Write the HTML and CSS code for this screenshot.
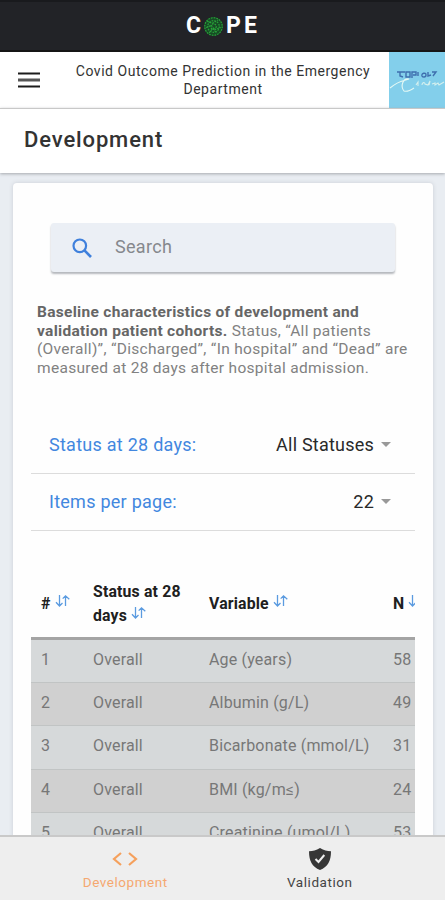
FILE: index.html
```html
<!DOCTYPE html>
<html lang="en">
<head>
<meta charset="utf-8">
<title>COPE</title>
<link rel="stylesheet" href="styles.css">
</head>
<body>
<svg class="defs" width="0" height="0">
  <symbol id="sort" viewBox="0 0 16 14"><path d="M4.500 1v11M1 8.200 4.500 12 7.500 9M10.500 12V2M7.700 4.600 10.500 1.800l3.800 3.400" fill="none" stroke="#5b9be0" stroke-width="1.300"/></symbol>
</svg>
<div class="app">
  <header class="brand"><span class="brand-c">C</span><svg class="globe" viewBox="0 0 18 18"><circle cx="9" cy="9" r="9" fill="#174a25"/><g fill="none" stroke="#28a43a" stroke-width="1.100" stroke-dasharray="1.600 1"><circle cx="9" cy="9" r="8.300"/><circle cx="9" cy="9" r="5.500"/><circle cx="9" cy="9" r="2.600"/><path d="M3 4l5 2 5-3M2 10l5-2 3 4 6-2M5 15l3-4 4 4"/></g></svg><span class="brand-p">P</span><span>E</span></header>
  <div class="bar">
    <svg class="menu" viewBox="0 0 22 16"><path d="M0 1.500h22M0 14.500h22" stroke="#1c1c1c" stroke-width="2"/><path d="M0 8h22" stroke="#555" stroke-width="3"/></svg>
    <div class="tagline">Covid Outcome Prediction in the Emergency<br>Department</div>
    <svg class="badge" viewBox="0 0 56 56"><rect width="56" height="56" fill="#83cfeb"/><g fill="none" stroke="#3f6fae" stroke-width="1.400"><path d="M8 20h8M11 20v4l3 1M17 20v5h4v-5zM23 26v-6h4v3h-3M29 20v4M33 24c-1-3 4-4 4-1s-4 2-4 1M39 20v4l3-1M43 20h4l-3 4"/></g><path d="M1 36c5-4 8-6 19-9-6-1-9 7-5 12 3 1 7-1 10-3" fill="none" stroke="#e4f8f4" stroke-width="1.100"/><path d="M27 33l2-3v4M33 33c0-3 3-3 3-1l3 1 2-4-1 4M43 32l3-1v2l3-2 1 2 5-3" fill="none" stroke="#d5f0ee" stroke-width="1.100"/></svg>
  </div>
  <h1 class="title">Development</h1>
  <main class="content">
    <section class="card">
      <div class="search"><svg viewBox="0 0 20 20"><circle cx="7.800" cy="7.800" r="6.300" fill="none" stroke="#3f80dc" stroke-width="2.200"/><path d="M12.200 12.200 19 19" stroke="#3f80dc" stroke-width="2.600"/></svg><span>Search</span></div>
      <p class="intro"><b>Baseline characteristics of development and<br>validation patient cohorts.</b> Status, “All patients<br>(Overall)”, “Discharged”, “In hospital” and “Dead” are<br>measured at 28 days after hospital admission.</p>
      <div class="option"><span class="label">Status at 28 days:</span><span class="value">All Statuses</span><i class="caret"></i></div>
      <div class="option"><span class="label">Items per page:</span><span class="value">22</span><i class="caret"></i></div>
      <div class="table">
        <div class="row head"><span>#<svg class="sort"><use href="#sort"/></svg></span><span>Status at 28<br>days<svg class="sort"><use href="#sort"/></svg></span><span>Variable<svg class="sort"><use href="#sort"/></svg></span><span>N<svg class="sort"><use href="#sort"/></svg></span></div>
        <div class="row"><span>1</span><span>Overall</span><span>Age (years)</span><span>58</span></div>
        <div class="row"><span>2</span><span>Overall</span><span>Albumin (g/L)</span><span>49</span></div>
        <div class="row"><span>3</span><span>Overall</span><span>Bicarbonate (mmol/L)</span><span>31</span></div>
        <div class="row"><span>4</span><span>Overall</span><span>BMI (kg/m≤)</span><span>24</span></div>
        <div class="row"><span>5</span><span>Overall</span><span>Creatinine (umol/L)</span><span>53</span></div>
      </div>
    </section>
  </main>
  <nav class="tabs">
    <div class="tab active"><svg viewBox="0 0 26 24"><path d="M9 6 2 12l7 6M17 6l7 6-7 6" fill="none" stroke="#f5a05c" stroke-width="2.200"/></svg><span>Development</span></div>
    <div class="tab"><svg viewBox="0 0 26 24"><path d="M13 1c4 2.500 7 3 11 3.200C24 14 21 19.500 13 23 5 19.500 2 14 2 4.200 6 4 9 3.500 13 1z" fill="#363636"/><path d="m8.500 12 3 3 5.800-7" fill="none" stroke="#eee" stroke-width="2"/></svg><span>Validation</span></div>
  </nav>
</div>
</body>
</html>
```
FILE: styles.css
```css
* { box-sizing: border-box; }
body { margin: 0; font-family: Roboto, "Liberation Sans", sans-serif; background: #e9edf2; }
.defs { position: absolute; }
.app { height: 900px; display: flex; flex-direction: column; overflow: hidden; }
.brand { height: 52px; flex: none; background: #222327; border-top: 2px solid #191a1d; border-bottom: 2px solid #151515; color: #fff; display: flex; align-items: center; padding-left: 186px; font-size: 23px; font-weight: 700; line-height: 46px; }
.brand-c { width: 18px; }
.globe { width: 19px; height: 19px; margin-right: 3px; }
.brand-p { width: 18px; }
.bar { height: 56px; flex: none; background: #fff; display: flex; align-items: center; }
.menu { width: 22px; height: 16px; margin-left: 18px; flex: none; }
.tagline { margin: 0 -16px 0 0; flex: 1; text-align: center; font-size: 14px; line-height: 18px; letter-spacing: .53px; color: #333; padding: 0 0 1px 1px; }
.badge { width: 56px; height: 56px; flex: none; }
.title { margin: 0; height: 65px; flex: none; background: #fff; border-top: 1px solid #c8c8c8; box-shadow: 0 1px 3px #a5a8ad; font-size: 22px; line-height: 62px; font-weight: 500; letter-spacing: .87px; color: #333; padding-left: 24px; position: relative; }
.content { flex: 1; min-height: 0; padding: 10px 12px 0 13px; }
.card { height: 700px; background: #fefefe; border-radius: 4px 4px 0 0; box-shadow: 0 0 4px #c9ced5; padding: 40px 18px 0; }
.search { height: 49px; margin: 0 20px 0 20px; background: #ebeff5; border-radius: 3px; box-shadow: 0 2px 2px #b5b8bd; display: flex; align-items: center; padding-left: 21px; font-size: 18px; letter-spacing: .3px; color: #85888d; }
.search span { padding-bottom: 3px; }
.search svg { width: 20px; height: 20px; margin: 1px 23px 0 0; }
.intro { margin: 31px 0 0 6px; height: 76px; white-space: nowrap; font-size: 15.500px; line-height: 18.600px; color: #818181; letter-spacing: .3px; }
.intro b { color: #666; font-weight: 700; }
.option { height: 57px; border-bottom: 1px solid #dcdcdc; display: flex; align-items: center; padding: 0 24px 2px 18px; font-size: 18px; }
.intro + .option { margin-top: 38px; }
.label { color: #4287df; flex: 1; letter-spacing: .26px; }
.value { color: #292929; letter-spacing: .22px; }
.caret { border: 5px solid transparent; border-top-color: #999; border-bottom: 0; margin-left: 7px; }
.table { margin-top: 36px; overflow: hidden; }
.row { height: 43.200px; display: grid; grid-template-columns: 52px 116px 184px 60px; align-items: center; padding: 0 0 3px 10px; background: #d6d9da; border-bottom: 1px solid #c1c4c4; color: #777; font-size: 16px; letter-spacing: .17px; white-space: nowrap; }
.row:nth-child(odd) { background: #d0d0d0; }
.row.head { height: 73px; padding: 3px 0 0 10px; background: #fefefe; border-bottom: 3px solid #a4a4a4; color: #202020; font-weight: 700; font-size: 15.800px; line-height: 24px; }
.sort { width: 16px; height: 14px; margin: 0 0 1px 4px; }
.tabs { height: 65px; flex: none; background: #eee; border-top: 2px solid #c9c9c9; display: flex; position: relative; padding: 0 28px; }
.tab { flex: 1; display: flex; flex-direction: column; align-items: center; padding-top: 10px; font-size: 13.500px; letter-spacing: .55px; color: #444; }
.tab svg { width: 26px; height: 24px; margin-bottom: 3px; }
.tab.active { color: #f5a870; }
```
